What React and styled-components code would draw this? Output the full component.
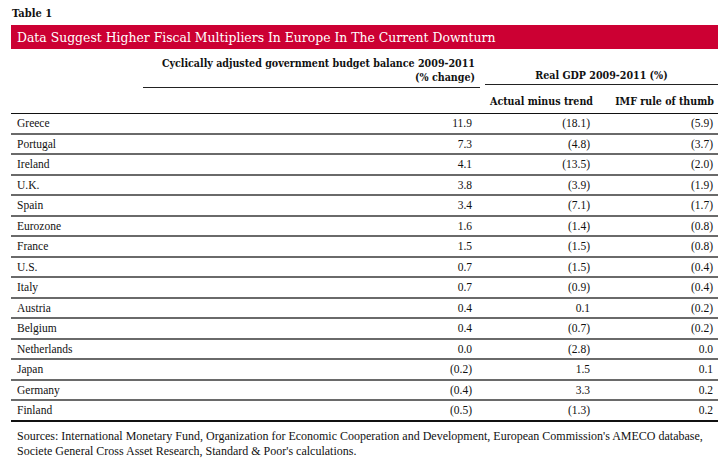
import React from "react";
import styled, { createGlobalStyle } from "styled-components";

const Global = createGlobalStyle`
  *, *::before, *::after { box-sizing: border-box; }
  html, body { margin: 0; padding: 0; background: #fff; }
  body { font-family: "Liberation Serif", "Times New Roman", serif; color: #111; }
`;

const Page = styled.div`
  width: 723px;
  padding: 7px 5px 0 11px;
`;

const Label = styled.div`
  font-family: "DejaVu Serif Condensed", "DejaVu Serif", serif;
  font-weight: bold;
  font-size: 11px;
  line-height: 14px;
  height: 18px;
  padding-left: 1px;
`;

const TitleBar = styled.div`
  background: #cc0033;
  color: #fff;
  height: 24px;
  display: flex;
  align-items: center;
  padding-left: 6px;
  font-family: "DejaVu Serif Condensed", "DejaVu Serif", serif;
  font-size: 13.8px;
`;

const Cols = `
  display: grid;
  grid-template-columns: 132px 342px 113px 120px;
`;

const HeadTop = styled.div`
  ${Cols}
  height: 39px;
  padding-top: 7px;
  font-family: "DejaVu Serif Condensed", "DejaVu Serif", serif;
  font-weight: bold;
  font-size: 10.6px;
  line-height: 14px;
`;

const BalanceHead = styled.div`
  grid-column: 2;
  text-align: right;
  padding-right: 5px;
  margin-right: 5px;
  height: 32px;
  border-bottom: 1px solid #222;
`;

const GroupHead = styled.div`
  grid-column: 3 / span 2;
  text-align: center;
  align-self: start;
  margin-top: 12px;
  height: 17px;
  border-bottom: 1.5px solid #222;
`;

const HeadSub = styled.div`
  ${Cols}
  height: 26px;
  align-items: center;
  border-bottom: 1.5px solid #111;
  font-family: "DejaVu Serif Condensed", "DejaVu Serif", serif;
  font-weight: bold;
  font-size: 10.6px;
  padding-top: 1px;
`;

const SubCell = styled.div`
  grid-column: ${(p) => p.$col};
  text-align: right;
  padding-right: ${(p) => p.$pad}px;
`;

const Row = styled.div`
  ${Cols}
  height: 20.5px;
  align-items: center;
  border-bottom: 2px solid ${(p) => (p.$last ? "#111" : "#6a6a6a")};
  font-size: 11.5px;
`;

const Country = styled.div`
  padding-left: 6px;
`;

const Num = styled.div`
  text-align: right;
  padding-right: ${(p) => p.$pad}px;
`;

const Sources = styled.div`
  padding: 7px 0 0 6px;
  font-size: 12px;
  line-height: 15px;
`;

const rows = [
  ["Greece", "11.9", "(18.1)", "(5.9)"],
  ["Portugal", "7.3", "(4.8)", "(3.7)"],
  ["Ireland", "4.1", "(13.5)", "(2.0)"],
  ["U.K.", "3.8", "(3.9)", "(1.9)"],
  ["Spain", "3.4", "(7.1)", "(1.7)"],
  ["Eurozone", "1.6", "(1.4)", "(0.8)"],
  ["France", "1.5", "(1.5)", "(0.8)"],
  ["U.S.", "0.7", "(1.5)", "(0.4)"],
  ["Italy", "0.7", "(0.9)", "(0.4)"],
  ["Austria", "0.4", "0.1", "(0.2)"],
  ["Belgium", "0.4", "(0.7)", "(0.2)"],
  ["Netherlands", "0.0", "(2.8)", "0.0"],
  ["Japan", "(0.2)", "1.5", "0.1"],
  ["Germany", "(0.4)", "3.3", "0.2"],
  ["Finland", "(0.5)", "(1.3)", "0.2"],
];

export default function App() {
  return (
    <>
      <Global />
      <Page>
        <Label>Table 1</Label>
        <TitleBar>Data Suggest Higher Fiscal Multipliers In Europe In The Current Downturn</TitleBar>
        <HeadTop>
          <BalanceHead>
            Cyclically adjusted government budget balance 2009-2011
            <br />
            (% change)
          </BalanceHead>
          <GroupHead>Real GDP 2009-2011 (%)</GroupHead>
        </HeadTop>
        <HeadSub>
          <SubCell $col={3} $pad={5}>Actual minus trend</SubCell>
          <SubCell $col={4} $pad={4}>IMF rule of thumb</SubCell>
        </HeadSub>
        {rows.map((r, i) => (
          <Row key={r[0]} $last={i === rows.length - 1}>
            <Country>{r[0]}</Country>
            <Num $pad={13}>{r[1]}</Num>
            <Num $pad={8}>{r[2]}</Num>
            <Num $pad={5}>{r[3]}</Num>
          </Row>
        ))}
        <Sources>
          Sources: International Monetary Fund, Organization for Economic Cooperation and Development, European Commission's AMECO database,
          <br />
          Societe General Cross Asset Research, Standard &amp; Poor's calculations.
        </Sources>
      </Page>
    </>
  );
}
